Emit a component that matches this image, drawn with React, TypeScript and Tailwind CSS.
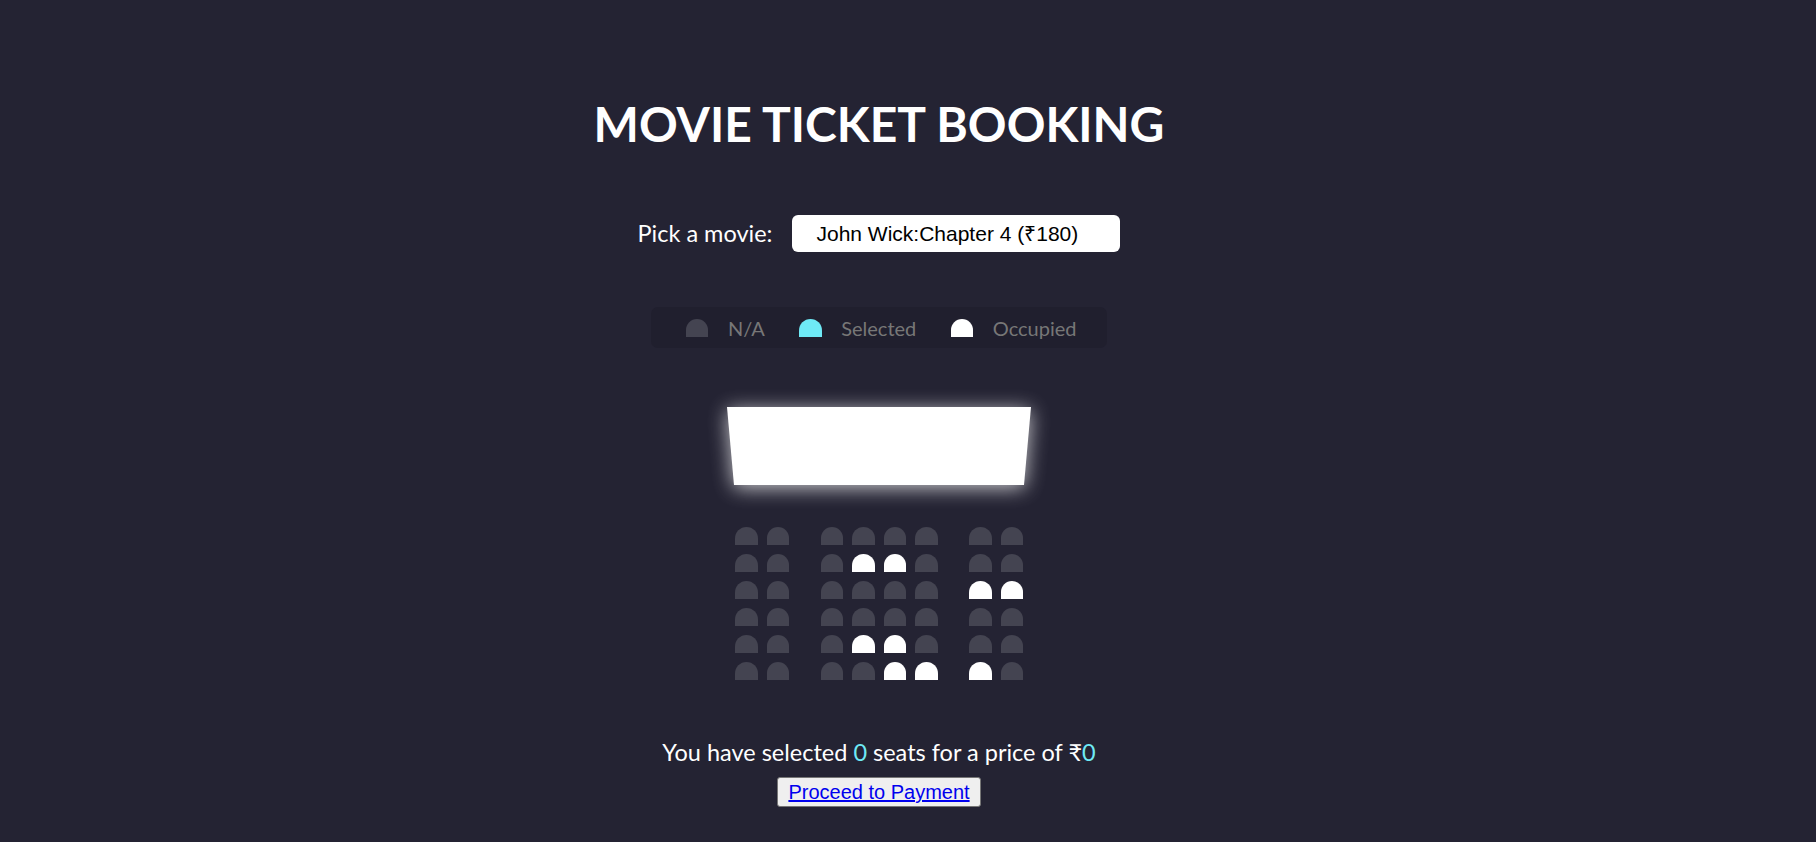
import React from 'react';

const occupied: Record<number, number[]> = {
  1: [3, 4],
  2: [6, 7],
  4: [3, 4],
  5: [4, 5, 6],
};

const Seat = ({ kind, className = '' }: { kind: 'na' | 'selected' | 'occupied'; className?: string }) => {
  const bg = kind === 'occupied' ? 'bg-white' : kind === 'selected' ? 'bg-[#6feaf6]' : 'bg-[#444451]';
  return <div className={`w-[22.5px] h-[18px] rounded-t-[15px] shrink-0 ${bg} ${className}`} />;
};

export default function App() {
  return (
    <div className="min-h-screen bg-[#242333] text-white font-['Lato','Noto_Sans',sans-serif] pr-[58px] flex flex-col items-center">
      <h1 className="mt-[94px] text-[48px] leading-[60px] font-bold">MOVIE TICKET BOOKING</h1>

      <div className="mt-[61px] flex items-center gap-[20px]">
        <label className="text-[23.5px]">Pick a movie:</label>
        <select className="appearance-none w-[328px] h-[37px] rounded-[6px] bg-white text-black pl-[24px] text-[21px] font-['Liberation_Sans','Arial',sans-serif] outline-none">
          <option>John Wick:Chapter 4 (₹180)</option>
        </select>
      </div>

      <ul className="mt-[55px] h-[41px] flex items-center px-[15px] rounded-[7px] bg-[#201f2e] text-[#777] text-[20px]">
        <li className="mx-[15px] flex items-center">
          <Seat kind="na" className="mx-[4.5px]" />
          <small className="ml-[15px] text-[20px]">N/A</small>
        </li>
        <li className="mx-[15px] flex items-center">
          <Seat kind="selected" className="mx-[4.5px]" />
          <small className="ml-[15px] text-[20px]">Selected</small>
        </li>
        <li className="mx-[15px] flex items-center">
          <Seat kind="occupied" className="mx-[4.5px]" />
          <small className="ml-[15px] text-[20px]">Occupied</small>
        </li>
      </ul>

      <div className="mt-[59px] [filter:drop-shadow(0_3px_10px_rgba(255,255,255,0.75))]">
        <div className="w-[304px] h-[78px] bg-white [clip-path:polygon(0_0,100%_0,97.7%_100%,2.3%_100%)]" />
      </div>

      <div className="mt-[42px] flex flex-col gap-[9px]">
        {[0, 1, 2, 3, 4, 5].map((r) => (
          <div key={r} className="flex gap-[9px]">
            {[0, 1, 2, 3, 4, 5, 6, 7].map((s) => (
              <Seat
                key={s}
                kind={occupied[r]?.includes(s) ? 'occupied' : 'na'}
                className={s === 2 || s === 6 ? 'ml-[22.5px]' : ''}
              />
            ))}
          </div>
        ))}
      </div>

      <p className="mt-[58px] text-[23.5px] leading-[1.2]">
        You have selected <span className="text-[#6feaf6]">0</span> seats for a price of ₹<span className="text-[#6feaf6]">0</span>
      </p>

      <button className="mt-[11px] h-[30px] px-[10px] bg-[#efefef] border border-[#767676] rounded-[3px] font-['Liberation_Sans','Arial',sans-serif] text-[20px] leading-none">
        <a href="#" className="text-[#0000ee] underline">Proceed to Payment</a>
      </button>
    </div>
  );
}
